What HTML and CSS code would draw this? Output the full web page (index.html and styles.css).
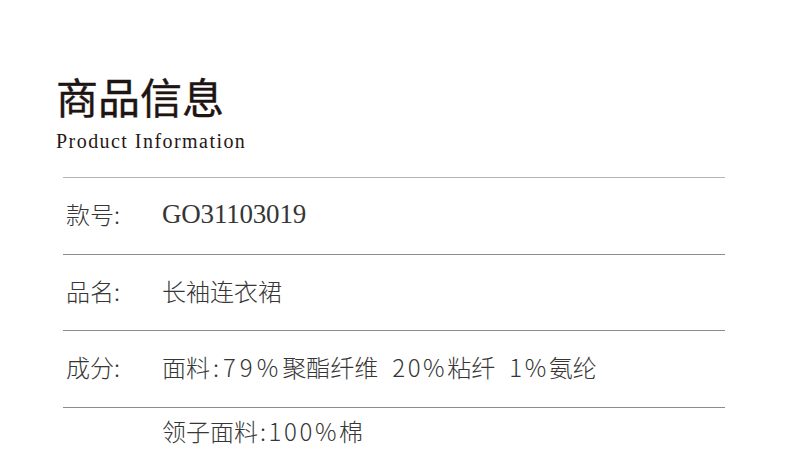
FILE: index.html
```html
<!DOCTYPE html>
<html lang="zh-CN">
<head>
<meta charset="utf-8">
<title>商品信息</title>
<link rel="stylesheet" href="styles.css">
</head>
<body>
<div class="page">
  <header class="heading">
    <h1 class="title">商品信息</h1>
    <p class="subtitle">Product Information</p>
  </header>
  <div class="spec">
    <div class="row row-first">
      <span class="label">款号:</span>
      <span class="value value-latin">GO31103019</span>
    </div>
    <div class="row">
      <span class="label">品名:</span>
      <span class="value">长袖连衣裙</span>
    </div>
    <div class="row">
      <span class="label">成分:</span>
      <span class="value">面料<span class="num num-wide">:79%</span>聚酯纤维<span class="gap"></span><span class="num">20%</span>粘纤<span class="gap"></span><span class="num">1%</span>氨纶</span>
    </div>
    <div class="row row-cont">
      <span class="label"></span>
      <span class="value">领子面料<span class="num">:100%</span>棉</span>
    </div>
  </div>
</div>
</body>
</html>
```

FILE: styles.css
```css
html, body {
  margin: 0;
  padding: 0;
  background: #ffffff;
}

.page {
  padding-top: 75px;
  font-family: "Noto Sans CJK SC", "Noto Sans", sans-serif;
}

.heading {
  padding-left: 56px;
}

.title {
  margin: 0;
  font-size: 42px;
  line-height: 42px;
  font-weight: 400;
  color: #1e1513;
  letter-spacing: 0;
  -webkit-text-stroke: 0.4px #1e1513;
}

.subtitle {
  margin: 14px 0 0;
  font-family: "Liberation Serif", serif;
  font-size: 20px;
  line-height: 20px;
  letter-spacing: 1.45px;
  color: #231815;
}

.spec {
  margin: 26px 0 0 63px;
  width: 662px;
}

.row {
  display: flex;
  align-items: center;
  box-sizing: border-box;
  height: 76.5px;
  border-top: 1px solid #8c8c8c;
  font-size: 24px;
  line-height: 24px;
  font-weight: 300;
  color: #363636;
}

.row-first {
  border-top-color: #b4b4b4;
}

.row-cont {
  align-items: flex-start;
  padding-top: 11px;
}

.label {
  flex: 0 0 99px;
  box-sizing: border-box;
  padding-left: 3px;
  padding-bottom: 3px;
}

.value {
  white-space: nowrap;
  padding-bottom: 3px;
}

.num {
  letter-spacing: 2.6px;
  padding-left: 2px;
}

.num-wide {
  letter-spacing: 4px;
  padding-left: 3px;
}

.gap {
  display: inline-block;
  width: 12px;
}

.value-latin {
  font-family: "Liberation Serif", serif;
  font-size: 27px;
  letter-spacing: -0.2px;
  font-weight: 400;
}
```
